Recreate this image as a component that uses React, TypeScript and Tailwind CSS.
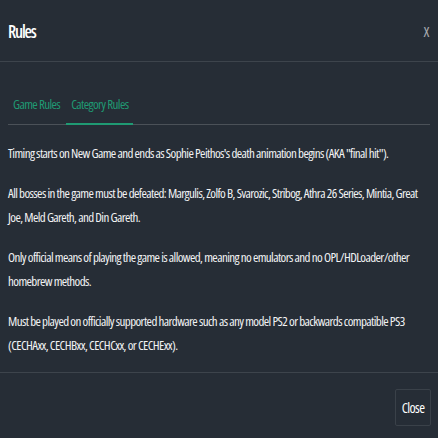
import React from "react";

export default function App() {
  const font = { fontFamily: '"Open Sans", "Liberation Sans", sans-serif' };
  return (
    <div className="w-[438px] h-[438px] bg-[#262d36] text-white font-stretch-[75%] overflow-hidden" style={font}>
      <div className="flex items-center justify-between h-[62px] pl-2 pr-[9px] border-b border-[#3d444c]">
        <span className="text-[17px] font-semibold text-white tracking-[-1.2px] pt-[2px]">Rules</span>
        <span className="text-[15px] text-[#a7abb0] tracking-[-0.5px] pt-[2px]">X</span>
      </div>
      <div className="px-2 pt-[33px]">
        <div className="flex border-b border-[#4b5158] text-[13px] text-[#1f9a73] tracking-[-0.6px]">
          <div className="pl-[5px] pr-[6px] pb-[8px]">Game Rules</div>
          <div className="px-[5px] pb-[8px] border-b-2 border-[#1f9a73] -mb-[1px]">Category Rules</div>
        </div>
        <div className="pt-[16px] pb-[15px] text-[13px] leading-[24px] text-[#f2f3f4] tracking-[-0.6px]">
          <p className="mb-[16px]">Timing starts on New Game and ends as Sophie Peithos's death animation begins (AKA "final hit").</p>
          <p className="mb-[16px]">All bosses in the game must be defeated: Margulis, Zolfo B, Svarozic, Stribog, Athra 26 Series, Mintia, Great Joe, Meld Gareth, and Din Gareth.</p>
          <p className="mb-[16px]">Only official means of playing the game is allowed, meaning no emulators and no OPL/HDLoader/other homebrew methods.</p>
          <p>Must be played on officially supported hardware such as any model PS2 or backwards compatible PS3 (CECHAxx, CECHBxx, CECHCxx, or CECHExx).</p>
        </div>
      </div>
      <div className="border-t border-[#3d444c] flex justify-end px-[7px] pt-[16px]">
        <button className="w-[36px] h-[37px] border border-[#3a4149] rounded-[2px] text-[14px] text-white tracking-[-0.6px]">Close</button>
      </div>
    </div>
  );
}
